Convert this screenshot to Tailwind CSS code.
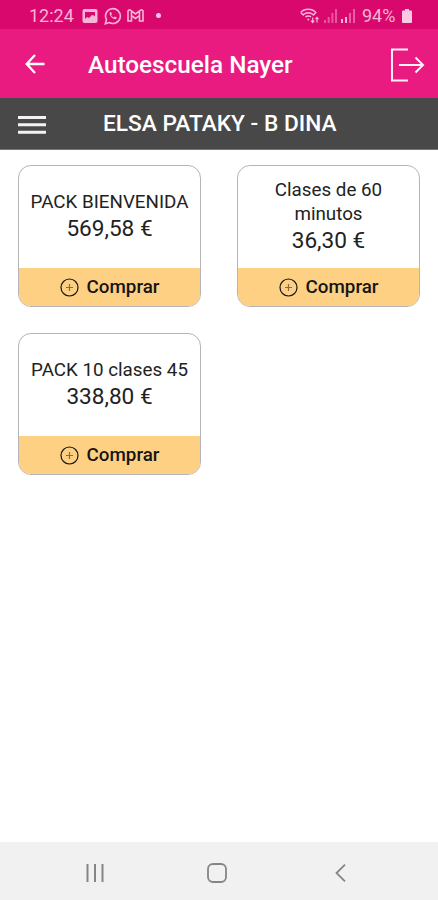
<!DOCTYPE html>
<html lang="es">
  <head>
    <meta charset="utf-8" />
    <title>Autoescuela Nayer</title>
    <script src="https://cdn.jsdelivr.net/npm/@tailwindcss/browser@4"></script>
  </head>

  <body class="flex flex-col h-screen overflow-hidden bg-white font-['Roboto',sans-serif]">
    <!-- Status bar -->
    <div class="h-[29px] shrink-0 bg-[#d9086d] text-[#f9b4d8] flex items-center justify-between pl-[29px] pr-[26px] pt-[2px]">
      <div class="flex items-center">
        <span class="w-[53px] text-[18px] leading-none">12:24</span>
        <svg class="w-4 h-4" viewBox="0 0 16 16">
          <rect x="0.5" y="1" width="15" height="14" rx="2" fill="currentColor" />
          <path d="M3 4h10v4l-3-1-3 3-2-1-2 2z" fill="#d9086d" />
        </svg>
        <svg class="w-[18px] h-[18px] ml-[6px]" viewBox="0 0 18 18" fill="none" stroke="currentColor" stroke-width="1.6">
          <path d="M1.3 16.7l1.2-4A7.4 7.4 0 1 1 5.3 15.5z" />
          <path d="M6 5.3c-1 1.5.2 3.7 1.8 5.2s3.7 2.3 4.7 1.1l.3-1.1-2-1-1 1c-1.3-.5-2.2-1.4-2.7-2.5l.8-1-.8-1.9z" fill="currentColor" stroke="none" />
        </svg>
        <svg class="w-[17px] h-[13px] ml-[5px]" viewBox="0 0 17 13" fill="none" stroke="currentColor" stroke-width="1.6">
          <path d="M1 12V2.3C1 .8 2.7.5 3.7 1.3L8.5 5l4.8-3.7c1-.8 2.7-.5 2.7 1V12h-3.5V6.5l-4 3-4-3V12zM4.5 2v4.5M12.5 2v4.5" />
        </svg>
        <span class="ml-[12px] w-[5px] h-[5px] rounded-full bg-[#fbc9e2]"></span>
      </div>
      <div class="flex items-center">
        <svg class="w-[19px] h-4" viewBox="0 0 19 16" fill="none" stroke="currentColor" stroke-width="1.5">
          <path d="M.7 4.5C4.5.3 12 .3 15.8 4.5L13 7.500M.7 4.500l3 3M3.500 6.500c2.500-2.500 7-2.500 9.500 0M5.500 9c1.500-1.500 4-1.500 5.500 0" />
          <circle cx="8.3" cy="11.5" r="1" fill="currentColor" stroke="none" />
          <path d="M12.7 9.5v5M11 12.7l1.7 1.8 1.5-1.8M17 14.5v-5M15.4 11.2L17 9.5l1.6 1.7" stroke-width="1.2" />
        </svg>
        <svg class="w-[13px] h-[14px] ml-[5px]" viewBox="0 0 13 14" fill="currentColor" opacity="0.45">
          <path d="M0 11h2v3H0zM3.7 8h2v6h-2zM7.4 4h2v10h-2zM11 0h2v14h-2z" />
        </svg>
        <svg class="w-[14px] h-[14px] ml-[4px]" viewBox="0 0 14 14" fill="currentColor">
          <path d="M0 10h2v4H0zM4 8h2v6H4z" />
          <path d="M8 4h2v10H8zM12 0h2v14h-2z" opacity="0.5" />
        </svg>
        <span class="ml-[7px] w-[35px] text-[18px] leading-none">94%</span>
        <svg class="w-[10px] h-[14px] ml-[5px]" viewBox="0 0 10 14" fill="#fbc9e2">
          <path d="M3 0h4v1.5h2q1 0 1 1V13q0 1-1 1H1q-1 0-1-1V2.500q0-1 1-1h2z" />
        </svg>
      </div>
    </div>

    <!-- Header -->
    <header class="h-[69px] shrink-0 bg-[#e91b80] text-white flex items-center pl-[25px] pr-[13px] pt-[2px]">
      <svg class="w-[20px] h-[20px] -mt-[2px]" viewBox="0 0 20 20" fill="none" stroke="currentColor" stroke-width="2.3">
        <path d="M10 1L1.7 10l8.3 9M2 10h17.5" />
      </svg>
      <h1 class="ml-[43px] pt-[2px] w-[206px] whitespace-nowrap text-[24.3px] font-medium">Autoescuela Nayer</h1>
      <svg class="ml-auto w-[35px] h-[34px]" viewBox="0 0 35 34" fill="none" stroke="#fff0f8" stroke-width="2">
        <path d="M18 1.5H2v31h16M9 17h24M25.5 9.5L33 17l-7.5 7.5" />
      </svg>
    </header>

    <!-- Student bar -->
    <div class="h-[52px] shrink-0 bg-[#484848] border-b border-[#777777] text-white flex items-center pl-[18px]">
      <svg class="w-[28px] h-[20px] mt-[3px]" viewBox="0 0 28 20" fill="#f2f2f2">
        <path d="M0 1h28v3H0zM0 8.3h28v3H0zM0 15.7h28v3H0z" />
      </svg>
      <h2 class="ml-[57px] pt-px whitespace-nowrap text-[22.7px] font-medium">ELSA PATAKY - B DINA</h2>
    </div>

    <!-- Packs -->
    <main class="flex-1 grid grid-cols-[183px_183px] auto-rows-[142px] content-start gap-x-[36px] gap-y-[26px] pl-[18px] pt-[15px] text-[#222222]">
      <div class="flex flex-col rounded-[13px] border border-[#b5b5b5] overflow-hidden text-center">
        <div class="flex-1 flex flex-col justify-center">
          <p class="text-[18.8px] leading-6 whitespace-nowrap">PACK BIENVENIDA</p>
          <p class="text-[22.6px] leading-[30px]">569,58 €</p>
        </div>
        <button class="h-[38px] bg-[#fdd083] text-[#151515] flex items-center justify-center gap-2 text-[18.8px] font-medium">
          <svg class="w-[19px] h-[19px]" viewBox="0 0 19 19" fill="none" stroke="currentColor" stroke-width="1.2">
            <circle cx="9.5" cy="9.5" r="8.5" /><path d="M6 9.5h7M9.5 6v7" stroke="#8b6c42" />
          </svg>
          Comprar
        </button>
      </div>

      <div class="flex flex-col rounded-[13px] border border-[#b5b5b5] overflow-hidden text-center">
        <div class="flex-1 flex flex-col justify-center">
          <p class="text-[18.8px] leading-6">Clases de 60<br>minutos</p>
          <p class="text-[22.6px] leading-[30px]">36,30 €</p>
        </div>
        <button class="h-[38px] bg-[#fdd083] text-[#151515] flex items-center justify-center gap-2 text-[18.8px] font-medium">
          <svg class="w-[19px] h-[19px]" viewBox="0 0 19 19" fill="none" stroke="currentColor" stroke-width="1.2">
            <circle cx="9.5" cy="9.5" r="8.5" /><path d="M6 9.5h7M9.5 6v7" stroke="#8b6c42" />
          </svg>
          Comprar
        </button>
      </div>

      <div class="flex flex-col rounded-[13px] border border-[#b5b5b5] overflow-hidden text-center">
        <div class="flex-1 flex flex-col justify-center">
          <p class="text-[18.8px] leading-6 whitespace-nowrap">PACK 10 clases 45</p>
          <p class="text-[22.6px] leading-[30px]">338,80 €</p>
        </div>
        <button class="h-[38px] bg-[#fdd083] text-[#151515] flex items-center justify-center gap-2 text-[18.8px] font-medium">
          <svg class="w-[19px] h-[19px]" viewBox="0 0 19 19" fill="none" stroke="currentColor" stroke-width="1.2">
            <circle cx="9.5" cy="9.5" r="8.5" /><path d="M6 9.5h7M9.5 6v7" stroke="#8b6c42" />
          </svg>
          Comprar
        </button>
      </div>
    </main>

    <!-- Android navigation -->
    <nav class="h-[58px] shrink-0 bg-[#f1f1f1] text-[#858585] flex items-center pl-[86px] pt-[3px]">
      <svg class="w-[18px] h-[18px]" viewBox="0 0 18 18" fill="none" stroke="currentColor" stroke-width="2">
        <path d="M1.5 0v18M9 0v18M16.5 0v18" />
      </svg>
      <svg class="w-[20px] h-[20px] ml-[103px]" viewBox="0 0 20 20" fill="none" stroke="currentColor" stroke-width="1.8">
        <rect x="1" y="1" width="18" height="18" rx="5" />
      </svg>
      <svg class="w-[11px] h-[18px] ml-[108px]" viewBox="0 0 11 18" fill="none" stroke="currentColor" stroke-width="1.8">
        <path d="M10 .7L1.5 9l8.5 8.3" />
      </svg>
    </nav>
  </body>
</html>
